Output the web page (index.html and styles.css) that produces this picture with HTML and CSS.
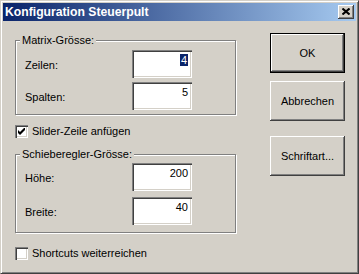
FILE: index.html
```html
<!DOCTYPE html>
<html lang="de">
<head>
    <meta charset="UTF-8">
    <meta name="viewport" content="width=device-width, initial-scale=1.0">
    <title>Konfiguration Steuerpult</title>
    <link rel="stylesheet" href="styles.css">
</head>
<body>

    <div class="window">
        <div class="titlebar">
            <span class="title">Konfiguration Steuerpult</span>
            <div class="close-btn">
                <svg width="8" height="7" viewBox="0 0 8 7">
                    <path d="M0.5 0.5 L7.5 6.5 M7.5 0.5 L0.5 6.5" stroke="#000" stroke-width="2" fill="none"/>
                </svg>
            </div>
        </div>

        <div class="main">
            <div class="left">
                <div class="group group-matrix">
                    <span class="group-title">Matrix-Grösse:</span>
                    <div class="field">
                        <label>Zeilen:</label>
                        <div class="edit"><span class="selected">4</span></div>
                    </div>
                    <div class="field">
                        <label>Spalten:</label>
                        <div class="edit">5</div>
                    </div>
                </div>

                <div class="check-row check-slider">
                    <div class="checkbox">
                        <svg width="7" height="7" viewBox="0 0 7 7">
                            <path d="M0 2 L2 4 L7 -1 L7 2 L2 7 L0 5 Z" fill="#000"/>
                        </svg>
                    </div>
                    <span>Slider-Zeile anfügen</span>
                </div>

                <div class="group group-slider">
                    <span class="group-title">Schieberegler-Grösse:</span>
                    <div class="field">
                        <label>Höhe:</label>
                        <div class="edit">200</div>
                    </div>
                    <div class="field">
                        <label>Breite:</label>
                        <div class="edit">40</div>
                    </div>
                </div>

                <div class="check-row check-shortcuts">
                    <div class="checkbox"></div>
                    <span>Shortcuts weiterreichen</span>
                </div>
            </div>

            <div class="buttons">
                <button class="btn btn-default">OK</button>
                <button class="btn btn-cancel">Abbrechen</button>
                <button class="btn btn-font">Schriftart...</button>
            </div>
        </div>
    </div>

</body>
</html>
```

FILE: styles.css
```css
body {
    margin: 0;
    padding: 0;
    font-family: "Liberation Sans", Arial, sans-serif;
    font-size: 11px;
    color: #000;
    background-color: #d4d0c8;
}

.window {
    width: 359px;
    height: 274px;
    box-sizing: border-box;
    background-color: #d4d0c8;
    border: 1px solid;
    border-color: #d4d0c8 #404040 #404040 #d4d0c8;
    padding: 2px;
    box-shadow: inset 1px 1px #fff, inset -1px -1px #808080;
}

.titlebar {
    height: 18px;
    display: flex;
    align-items: center;
    justify-content: space-between;
    padding: 0 2px;
    background: linear-gradient(to right, #0a246a, #a6caf0);
    color: #fff;
}

.title {
    font-weight: bold;
    font-size: 12.2px;
}

.close-btn {
    width: 16px;
    height: 14px;
    box-sizing: border-box;
    background-color: #d4d0c8;
    display: flex;
    align-items: center;
    justify-content: center;
    padding-bottom: 1px;
    box-shadow: inset -1px -1px #404040, inset 1px 1px #fff, inset -2px -2px #808080, inset 2px 2px #d4d0c8;
}

.main {
    display: flex;
    justify-content: space-between;
    padding: 0 11px 0 12px;
}

.left {
    width: 221px;
    display: flex;
    flex-direction: column;
}

/* etched group box */
.group {
    position: relative;
    border: 1px solid #808080;
    box-shadow: inset 1px 1px #fff, 1px 1px #fff;
    padding-left: 9px;
}

.group-title {
    position: absolute;
    top: -8px;
    left: 4px;
    padding: 0 2px;
    line-height: 14px;
    background-color: #d4d0c8;
}

.group-matrix {
    margin-top: 19px;
    padding-top: 9px;
    padding-bottom: 4px;
}

.group-slider {
    margin-top: 16px;
    padding-top: 8px;
    padding-bottom: 7px;
}

.group-matrix .field + .field {
    margin-top: 4px;
}

.group-slider .field + .field {
    margin-top: 6px;
}

.field {
    display: flex;
    align-items: center;
    height: 28px;
}

.field label {
    width: 107px;
    padding-top: 2px;
}

.edit {
    width: 60px;
    height: 28px;
    box-sizing: border-box;
    background-color: #fff;
    text-align: right;
    line-height: 14px;
    padding: 3px 4px 0 0;
    box-shadow: inset 1px 1px #808080, inset 2px 2px #404040, inset -1px -1px #fff, inset -2px -2px #d4d0c8;
}

.selected {
    background-color: #0a246a;
    color: #fff;
    padding: 0 1px;
}

.check-row {
    display: flex;
    align-items: center;
    height: 13px;
    line-height: 13px;
}

.check-slider {
    margin-top: 10px;
}

.check-shortcuts {
    margin-top: 14px;
}

.checkbox {
    width: 13px;
    height: 13px;
    box-sizing: border-box;
    background-color: #fff;
    margin-right: 4px;
    padding: 3px;
    box-shadow: inset 1px 1px #808080, inset 2px 2px #404040, inset -1px -1px #fff, inset -2px -2px #d4d0c8;
}

.checkbox svg {
    display: block;
}

.buttons {
    display: flex;
    flex-direction: column;
    padding-top: 12px;
}

.btn {
    width: 75px;
    height: 40px;
    box-sizing: border-box;
    font-family: "Liberation Sans", Arial, sans-serif;
    font-size: 11px;
    color: #000;
    background-color: #d4d0c8;
    border: none;
    padding: 0;
    box-shadow: inset -1px -1px #404040, inset 1px 1px #fff, inset -2px -2px #808080, inset 2px 2px #d4d0c8;
}

.btn-default {
    border: 1px solid #000;
}

.btn-cancel {
    margin-top: 8px;
}

.btn-font {
    margin-top: 15px;
}
```
